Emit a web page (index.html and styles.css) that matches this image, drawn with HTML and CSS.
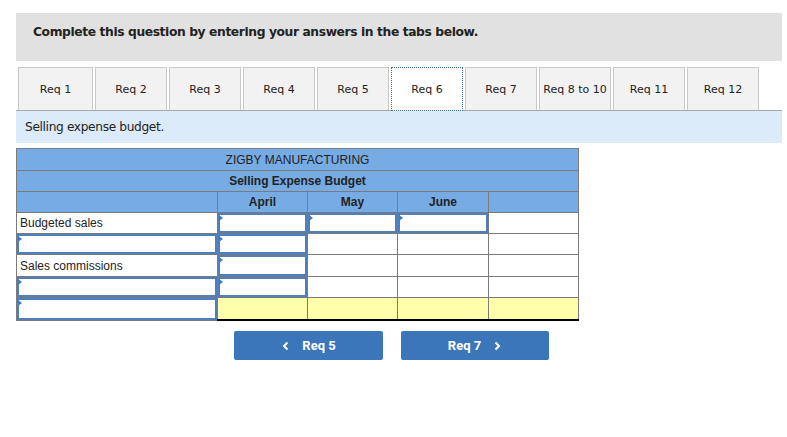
FILE: index.html
```html
<!DOCTYPE html>
<html>
<head>
<meta charset="utf-8">
<link rel="stylesheet" href="styles.css">
</head>
<body>
<div class="page">
  <div class="banner">Complete this question by entering your answers in the tabs below.</div>
  <div class="tabs">
    <div class="tab first">Req 1</div>
    <div class="tab">Req 2</div>
    <div class="tab">Req 3</div>
    <div class="tab">Req 4</div>
    <div class="tab">Req 5</div>
    <div class="tab active">Req 6</div>
    <div class="tab">Req 7</div>
    <div class="tab">Req 8 to 10</div>
    <div class="tab">Req 11</div>
    <div class="tab">Req 12</div>
  </div>
  <div class="info">Selling expense budget.</div>
  <table class="sheet">
    <colgroup>
      <col class="c-label"><col class="c-val"><col class="c-val"><col class="c-val2"><col class="c-val">
    </colgroup>
    <tr class="hdr h1"><td colspan="5">ZIGBY MANUFACTURING</td></tr>
    <tr class="hdr h2"><td colspan="5" class="bold">Selling Expense Budget</td></tr>
    <tr class="hdr h3"><td></td><td class="bold">April</td><td class="bold">May</td><td class="bold">June</td><td></td></tr>
    <tr class="r r1">
      <td class="lbl">Budgeted sales</td>
      <td><div class="inp"><i></i></div></td>
      <td><div class="inp"><i></i></div></td>
      <td><div class="inp"><i></i></div></td>
      <td></td>
    </tr>
    <tr class="r r2">
      <td><div class="inp"><i></i></div></td>
      <td><div class="inp"><i></i></div></td>
      <td></td><td></td><td></td>
    </tr>
    <tr class="r r3 blk">
      <td class="lbl">Sales commissions</td>
      <td><div class="inp"><i></i></div></td>
      <td></td><td></td><td></td>
    </tr>
    <tr class="r r4">
      <td><div class="inp"><i></i></div></td>
      <td><div class="inp"><i></i></div></td>
      <td></td><td></td><td></td>
    </tr>
    <tr class="r r5 blk total">
      <td><div class="inp"><i></i></div></td>
      <td class="y"></td><td class="y"></td><td class="y"></td><td class="y"></td>
    </tr>
  </table>
  <div class="nav">
    <div class="btn"><svg width="10" height="10" viewBox="0 0 10 10"><path d="M6.5 1.5 L3 5 L6.5 8.5" fill="none" stroke="#fff" stroke-width="2"/></svg><span>Req 5</span></div>
    <div class="btn next"><span>Req 7</span><svg width="10" height="10" viewBox="0 0 10 10"><path d="M3.5 1.5 L7 5 L3.5 8.5" fill="none" stroke="#fff" stroke-width="2"/></svg></div>
  </div>
</div>
</body>
</html>
```

FILE: styles.css
```css
html, body { margin: 0; padding: 0; background: #fff; }
.page {
  padding: 13px 5px 0 16px;
  width: 766px;
  font-family: "DejaVu Sans", Verdana, sans-serif;
  color: #222;
}
.banner {
  height: 48px;
  box-sizing: border-box;
  background: #e1e1e1;
  padding: 12px 0 0 17px;
  font-weight: bold;
  font-size: 12.3px;
  letter-spacing: -0.4px;
  color: #222;
}
.tabs {
  margin-top: 6px;
  display: flex;
  gap: 2px;
  padding-left: 2px;
  border-bottom: 1px solid #a6a6a6;
  height: 43px;
}
.tab {
  width: 72px;
  height: 43px;
  box-sizing: border-box;
  background: #f2f2f2;
  border: 1px solid #c8c8c8;
  border-bottom: none;
  display: flex;
  align-items: center;
  justify-content: center;
  font-size: 11px;
  color: #222;
}
.tab.first { width: 75px; }
.tab.active {
  background: #fff;
  border: 1px dotted #3a6db0;
  height: 44px;
  margin-bottom: -1px;
  position: relative;
}
.info {
  height: 32px;
  background: #dcebf9;
  padding-left: 9px;
  display: flex;
  align-items: center;
  font-size: 12.2px;
  letter-spacing: -0.35px;
  color: #222;
}
.sheet {
  margin-top: 5px;
  border-collapse: collapse;
  width: 562px;
  table-layout: fixed;
  font-family: "Liberation Sans", Arial, sans-serif;
  font-size: 12px;
  color: #222;
}
.c-label { width: 201px; }
.c-val { width: 90px; }
.c-val2 { width: 91px; }
.sheet td {
  border: 1px solid #7b7b7b;
  padding: 0;
  position: relative;
}
.hdr td {
  background: #77abe3;
  text-align: center;
  height: 20px;
}
.h1 td { height: 21px; }
.bold { font-weight: bold; }
.r td { height: 20px; background: #fff; }
.r3 td { height: 21px; }
.lbl { padding-left: 3px !important; }
.inp {
  position: absolute;
  left: 0; top: 0; right: 0; bottom: 0;
  border: 2px solid #4d7fbf;
}
.inp i {
  position: absolute;
  left: -1px; top: 0;
  width: 0; height: 0;
  border-top: 3px solid transparent;
  border-bottom: 3px solid transparent;
  border-left: 4px solid #3f7cc8;
}
.blk td + td { border-top: 1px solid #000; }
.total td { height: 21px; border-bottom: 2px solid #000; }
.total td:first-child { border-bottom: 1px solid #7b7b7b; }
.y { background: #ffffab !important; }
.nav {
  display: flex;
  gap: 18px;
  padding-left: 218px;
  margin-top: 10px;
}
.btn {
  width: 149px;
  height: 29px;
  background: #3a76b9;
  border-radius: 2px;
  color: #fff;
  font-family: Roboto, "Liberation Sans", Arial, sans-serif;
  font-weight: bold;
  font-size: 13px;
  display: flex;
  align-items: center;
  justify-content: center;
  gap: 11px;
}
.btn.next { width: 148px; }
```
